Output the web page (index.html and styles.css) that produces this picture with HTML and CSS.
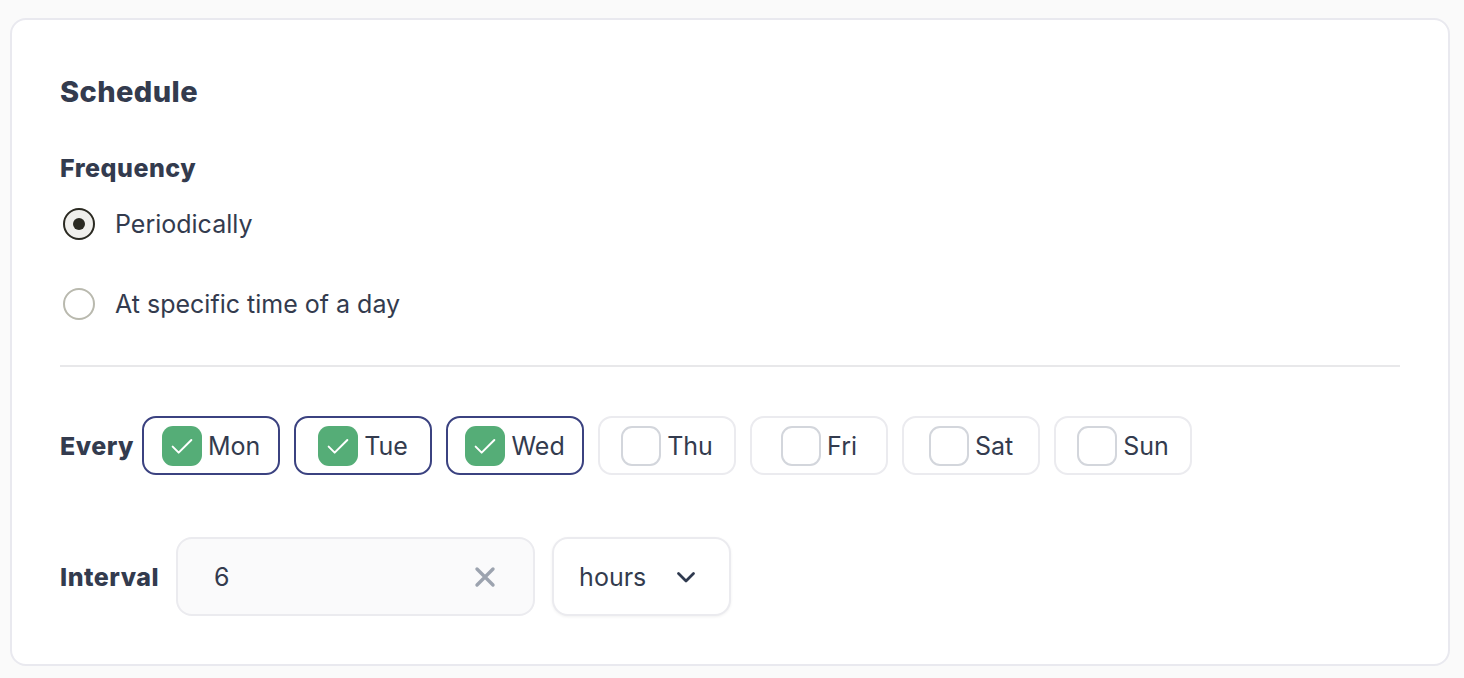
FILE: index.html
```html
<!DOCTYPE html>
<html>
<head>
<meta charset="utf-8">
<link rel="stylesheet" href="styles.css">
</head>
<body>
<div class="card">
  <h2 class="title">Schedule</h2>
  <div class="label">Frequency</div>
  <div class="radios">
    <label class="radio-row"><span class="radio checked"><span class="dot"></span></span><span class="radio-text">Periodically</span></label>
    <label class="radio-row"><span class="radio"></span><span class="radio-text">At specific time of a day</span></label>
  </div>
  <div class="divider"></div>
  <div class="row every-row">
    <span class="row-label">Every</span>
    <div class="chips">
      <div class="chip on"><span class="box"><svg viewBox="0 0 24 24" width="32" height="32"><path d="M5 12.5l4.5 4.5L19 7.5" fill="none" stroke="#fff" stroke-width="1.5" stroke-linecap="round" stroke-linejoin="round"/></svg></span><span class="chip-text">Mon</span></div>
      <div class="chip on"><span class="box"><svg viewBox="0 0 24 24" width="32" height="32"><path d="M5 12.5l4.5 4.5L19 7.5" fill="none" stroke="#fff" stroke-width="1.5" stroke-linecap="round" stroke-linejoin="round"/></svg></span><span class="chip-text">Tue</span></div>
      <div class="chip on"><span class="box"><svg viewBox="0 0 24 24" width="32" height="32"><path d="M5 12.5l4.5 4.5L19 7.5" fill="none" stroke="#fff" stroke-width="1.5" stroke-linecap="round" stroke-linejoin="round"/></svg></span><span class="chip-text">Wed</span></div>
      <div class="chip"><span class="box"></span><span class="chip-text">Thu</span></div>
      <div class="chip"><span class="box"></span><span class="chip-text">Fri</span></div>
      <div class="chip"><span class="box"></span><span class="chip-text">Sat</span></div>
      <div class="chip"><span class="box"></span><span class="chip-text">Sun</span></div>
    </div>
  </div>
  <div class="row interval-row">
    <span class="row-label">Interval</span>
    <div class="input">
      <span class="input-value">6</span>
      <svg class="clear" viewBox="0 0 22 22" width="22" height="22"><path d="M3 3L19 19M19 3L3 19" stroke="#9ca3af" stroke-width="3.4" stroke-linecap="round"/></svg>
    </div>
    <div class="select">
      <span class="select-value">hours</span>
      <svg class="chev" viewBox="0 0 20 12" width="20" height="12"><path d="M2.5 2.5l7.5 7.5 7.5-7.5" fill="none" stroke="#2f3a4f" stroke-width="2.8" stroke-linecap="round" stroke-linejoin="round"/></svg>
    </div>
  </div>
</div>
</body>
</html>
```
FILE: styles.css
```css
html, body {
  margin: 0;
  padding: 0;
  background: #fafafa;
}
body {
  font-family: "Inter", "Liberation Sans", sans-serif;
  color: #333b4e;
  width: 1464px;
  height: 678px;
  overflow: hidden;
}
.card {
  margin: 18px 14px 0 10px;
  height: 648px;
  box-sizing: border-box;
  background: #fff;
  border: 2px solid #e9e9ef;
  border-radius: 16px;
  padding: 54px 48px 0 48px;
  display: flex;
  flex-direction: column;
}
.title {
  margin: 0;
  font-size: 29px;
  font-weight: 800;
  letter-spacing: 0.4px;
  line-height: 36px;
}
.label {
  margin-top: 43px;
  font-size: 25px;
  font-weight: 800;
  letter-spacing: 0.5px;
  line-height: 30px;
}
.radios {
  display: flex;
  flex-direction: column;
  gap: 46px;
  margin-top: 24px;
}
.radio-row {
  display: flex;
  align-items: center;
  gap: 20px;
  height: 34px;
}
.radio {
  width: 32px;
  height: 32px;
  margin-left: 3px;
  box-sizing: border-box;
  border: 2px solid #b9b9ae;
  border-radius: 50%;
  display: flex;
  align-items: center;
  justify-content: center;
}
.radio.checked {
  border-color: #2b2a22;
  background: #f0efec;
}
.dot {
  width: 12px;
  height: 12px;
  border-radius: 50%;
  background: #2b2a22;
}
.radio-text {
  font-size: 25px;
  font-weight: 400;
  line-height: 30px;
}
.divider {
  margin-top: 44px;
  height: 2px;
  background: #e8e8ea;
}
.row {
  display: flex;
  align-items: center;
}
.row-label {
  font-size: 25px;
  font-weight: 800;
  letter-spacing: 0.5px;
}
.every-row {
  margin-top: 49px;
  gap: 8px;
}
.chips {
  display: flex;
  gap: 14px;
}
.chip {
  width: 138px;
  height: 59px;
  box-sizing: border-box;
  border: 2px solid #ebebef;
  border-radius: 14px;
  display: flex;
  align-items: center;
  justify-content: center;
  gap: 6px;
}
.chip.on {
  border-color: #3b4280;
}
.box {
  width: 40px;
  height: 40px;
  box-sizing: border-box;
  border: 2px solid #d3d6dc;
  border-radius: 11px;
  display: flex;
  align-items: center;
  justify-content: center;
}
.chip.on .box {
  border: none;
  background: #55ad77;
}
.chip-text {
  font-size: 25px;
  line-height: 30px;
}
.interval-row {
  margin-top: 62px;
  gap: 17px;
}
.input {
  width: 359px;
  height: 79px;
  box-sizing: border-box;
  border: 2px solid #ebebef;
  border-radius: 16px;
  background: #fafafb;
  display: flex;
  align-items: center;
  justify-content: space-between;
  padding: 0 37px 0 36px;
}
.input-value {
  font-size: 25px;
}
.select {
  width: 179px;
  height: 79px;
  box-sizing: border-box;
  border: 2px solid #ebebef;
  border-radius: 16px;
  background: #fff;
  box-shadow: 0 1px 3px rgba(0,0,0,0.06);
  display: flex;
  align-items: center;
  justify-content: space-between;
  padding: 0 33px 0 25px;
}
.select-value {
  font-size: 25px;
}
```
